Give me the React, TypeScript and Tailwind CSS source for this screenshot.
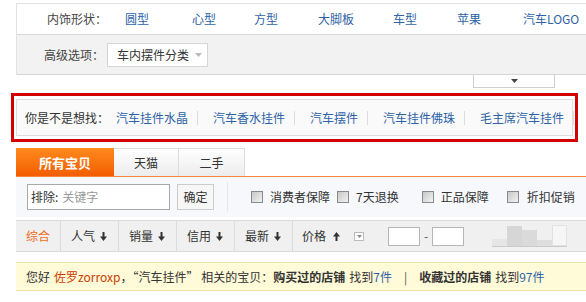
import React from "react";

const font = { fontFamily: '"Noto Sans CJK SC", "Noto Sans", sans-serif' };

const shapes = [
  { name: "圆型", w: "w-[67px]" },
  { name: "心型", w: "w-[62px]" },
  { name: "方型", w: "w-[64px]" },
  { name: "大脚板", w: "w-[75px]" },
  { name: "车型", w: "w-[64px]" },
  { name: "苹果", w: "w-[66px]" },
  { name: "汽车LOGO", w: "w-[70px]" },
];

const suggestions = ["汽车挂件水晶", "汽车香水挂件", "汽车摆件", "汽车挂件佛珠", "毛主席汽车挂件"];

const sorts = ["人气", "销量", "信用", "最新"];

const Arrow = ({ up = false }: { up?: boolean }) => (
  <svg width="7" height="9" viewBox="0 0 7 9" className={up ? "rotate-180" : ""}>
    <rect x="2.5" y="0" width="2" height="5" fill="#333" />
    <path d="M0 4.5 L7 4.5 L3.5 9 Z" fill="#333" />
  </svg>
);

const Check = () => (
  <span className="inline-block w-[12px] h-[12px] border border-[#8a8a8a] bg-gradient-to-br from-[#c8c8c8] to-[#f2f2f2]" />
);

const bars = [
  { h: "h-[7px]", c: "bg-[#e6e6e6]" },
  { h: "h-[20px]", c: "bg-[#d6d6d6]" },
  { h: "h-[16px]", c: "bg-[#dadada]" },
  { h: "h-[6px]", c: "bg-[#dedede]" },
  { h: "h-[21px]", c: "bg-[#f6f6f6] border border-[#e2e2e2]" },
];

export default function App() {
  return (
    <div className="w-[586px] h-[302px] bg-white overflow-hidden text-[12px] leading-none text-[#333]" style={font}>
      <div className="h-[3px]" />
      {/* attribute filters */}
      <div className="ml-[16px] border-l border-t border-[#e2e2e2]">
        <div className="h-[31px] flex items-center border-b border-[#d9d9d9] whitespace-nowrap">
          <span className="ml-[30px] w-[78px] shrink-0 text-[#444]">内饰形状：</span>
          {shapes.map((s) => (
            <span key={s.name} className={`${s.w} text-[#2d62a6] shrink-0`}>{s.name}</span>
          ))}
        </div>
        <div className="h-[40px] flex items-center bg-[#f2f2f2] border-b border-[#d5d5d5]">
          <span className="ml-[27px] w-[63px] shrink-0 text-[#444]">高级选项：</span>
          <div className="w-[101px] h-[24px] bg-white border border-[#d6d6d6] flex items-center pl-[9px] gap-[6px]">
            <span>车内摆件分类</span>
            <svg width="7" height="4" viewBox="0 0 7 4"><path d="M0 0 L7 0 L3.5 4 Z" fill="#bbb" /></svg>
          </div>
        </div>
      </div>
      <div className="h-[13px]">
        <div className="ml-[473px] w-[82px] h-[13px] bg-white border-x border-b border-[#cfcfcf] flex items-center justify-center">
          <svg width="7" height="4" viewBox="0 0 7 4"><path d="M0 0 L7 0 L3.5 4 Z" fill="#444" /></svg>
        </div>
      </div>

      {/* did you mean */}
      <div className="mt-[5px] ml-[11px] w-[567px] h-[49px] border-[3px] border-[#d40000] px-[2px] py-[3px]">
        <div className="h-full border border-[#dddddd] bg-[#fafafa] flex items-center pl-[8px] whitespace-nowrap">
          <span className="w-[91px] shrink-0 text-[#333]">你是不是想找：</span>
          {suggestions.map((s) => (
            <span key={s} className="flex items-center shrink-0 text-[#2d62a6]">
              {s}
              <span className="ml-[9px] mr-[15px] w-px h-[14px] bg-[#dcdcdc]" />
            </span>
          ))}
        </div>
      </div>

      {/* tabs */}
      <div className="mt-[6px] ml-[16px] flex border-b border-[#f5863a]">
        <div className="w-[98px] h-[28px] flex items-center justify-center bg-gradient-to-b from-[#ff8a1c] to-[#f25c00] text-white font-bold text-[13px]">所有宝贝</div>
        <div className="w-[65px] h-[28px] flex items-center justify-center bg-gradient-to-b from-white to-[#ececec] border-r border-t border-[#dcdcdc]">天猫</div>
        <div className="w-[66px] h-[28px] flex items-center justify-center bg-gradient-to-b from-white to-[#ececec] border-r border-t border-[#dcdcdc]">二手</div>
      </div>

      {/* filter row */}
      <div className="ml-[16px] h-[40px] bg-[#f6f8fc] flex items-center whitespace-nowrap">
        <div className="ml-[11px] w-[143px] h-[26px] bg-white border border-[#a9a9a9] flex items-center pl-[3px]">
          <span className="text-[#333]">排除:</span>
          <span className="ml-[4px] text-[#999]">关键字</span>
        </div>
        <div className="ml-[7px] w-[37px] h-[26px] border border-[#cccccc] bg-[#f7f7f7] flex items-center justify-center">确定</div>
        <span className="ml-[13px] w-px h-[30px] bg-[#e6e6e6]" />
        <span className="ml-[23px] flex items-center gap-[7px]"><Check />消费者保障</span>
        <span className="ml-[7px] flex items-center gap-[7px]"><Check />7天退换</span>
        <span className="ml-[23px] flex items-center gap-[7px]"><Check />正品保障</span>
        <span className="ml-[18px] flex items-center gap-[8px]"><Check />折扣促销</span>
      </div>

      {/* sort row */}
      <div className="mt-[3px] ml-[16px] h-[32px] bg-[#f0f0f0] border-t border-b border-[#dadada] flex items-center whitespace-nowrap">
        <span className="ml-[10px] w-[34px] text-[#f06a1a]">综合</span>
        <span className="w-px h-[30px] bg-[#dcdcdc]" />
        {sorts.map((s) => (
          <React.Fragment key={s}>
            <span className="w-[57px] pl-[10px] flex items-center gap-[5px]">{s}<Arrow /></span>
            <span className="w-px h-[30px] bg-[#dcdcdc]" />
          </React.Fragment>
        ))}
        <span className="ml-[9px] flex items-center gap-[7px]">价格<Arrow up /></span>
        <span className="ml-[14px] w-[10px] h-[9px] border border-[#bbb] bg-white flex items-center justify-center">
          <svg width="5" height="3" viewBox="0 0 5 3"><path d="M0 0 L5 0 L2.5 3 Z" fill="#888" /></svg>
        </span>
        <span className="ml-[24px] w-[32px] h-[19px] bg-white border border-[#b5b5b5]" />
        <span className="mx-[4px] text-[#555]">-</span>
        <span className="w-[32px] h-[19px] bg-white border border-[#b5b5b5]" />
        <div className="ml-[28px] h-[22px] flex items-end border-b border-[#cccccc]">
          {bars.map((b, i) => (
            <span key={i} className={`w-[15px] ${b.h} ${b.c}`} />
          ))}
        </div>
      </div>

      {/* notice */}
      <div className="mt-[10px] ml-[16px] h-[29px] bg-[#fffad8] border-y border-[#efe2aa] flex items-center pl-[10px] whitespace-nowrap">
        <span>您好</span>
        <span className="ml-[4px] text-[#cc3d00]">佐罗zorroxp</span>
        <span>，“汽车挂件” 相关的宝贝：</span>
        <span className="font-bold">购买过的店铺</span>
        <span className="ml-[4px]">找到</span>
        <span className="text-[#2d62a6]">7件</span>
        <span className="mx-[12px] text-[#555]">|</span>
        <span className="font-bold">收藏过的店铺</span>
        <span className="ml-[4px]">找到</span>
        <span className="text-[#2d62a6]">97件</span>
      </div>
    </div>
  );
}
